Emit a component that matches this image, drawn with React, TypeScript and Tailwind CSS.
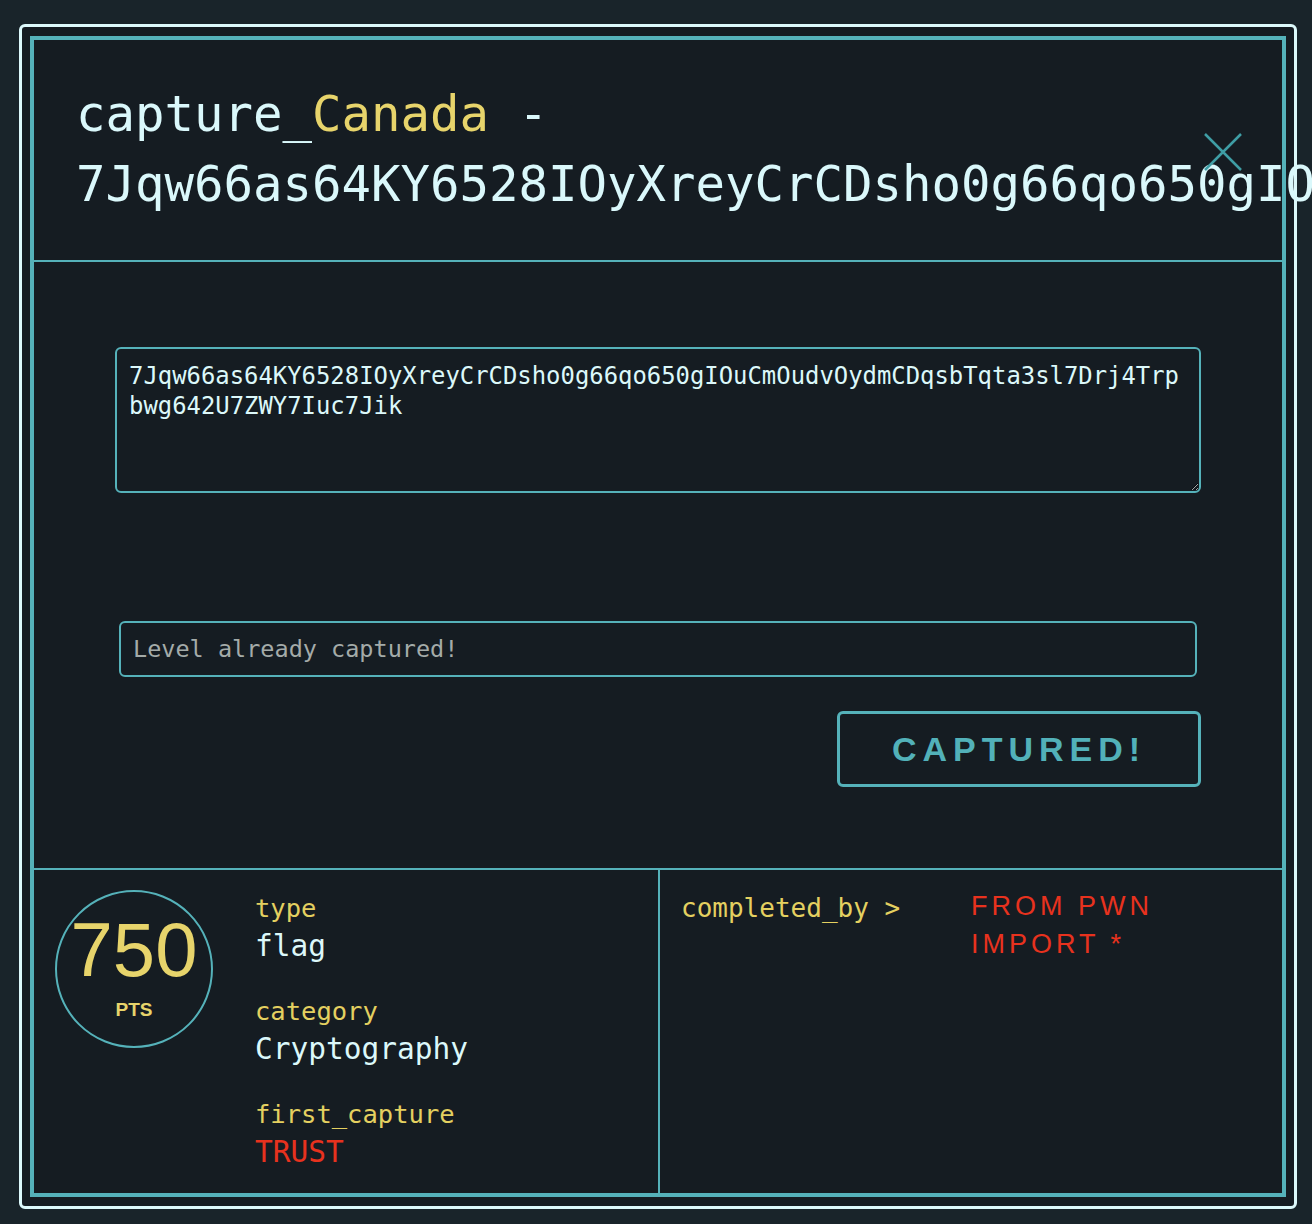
import { useState } from 'react';

const mono = "font-['DejaVu_Sans_Mono',monospace]";
const sans = "font-['Liberation_Sans',Arial,sans-serif]";

interface LevelInfo {
  country: string;
  hash: string;
  flag: string;
  points: number;
  type: string;
  category: string;
  firstCapture: string;
  completedBy: string[];
}

const level: LevelInfo = {
  country: 'Canada',
  hash: '7Jqw66as64KY6528IOyXreyCrCDsho0g66qo650gIOuCmOudvOydmCDqsbTqta3sl7Drj4Trp',
  flag: '7Jqw66as64KY6528IOyXreyCrCDsho0g66qo650gIOuCmOudvOydmCDqsbTqta3sl7Drj4Trpbwg642U7ZWY7Iuc7Jik',
  points: 750,
  type: 'flag',
  category: 'Cryptography',
  firstCapture: 'TRUST',
  completedBy: ['FROM PWN IMPORT *'],
};

function CloseIcon() {
  return (
    <svg width="38" height="38" viewBox="0 0 38 38" fill="none">
      <path d="M1 1L37 37M37 1L1 37" stroke="#3f9ea5" strokeWidth="2.5" />
    </svg>
  );
}

export default function App() {
  const [answer, setAnswer] = useState('');

  return (
    <div className="min-h-screen w-full overflow-hidden bg-[#19242a] pt-6 pb-4 pl-[19px] pr-[15px]">
      <div className="rounded-md border-[3px] border-[#dcf9fb] bg-[#151c22] px-2 py-[9px]">
        <div className="border-4 border-[#55b2ba]">
          {/* header */}
          <div className="relative h-[222px] border-b-2 border-[#55b2ba] pl-[42px] pt-[40px]">
            <h1 className={`${mono} text-[49px] leading-[70px] text-[#daf8fb]`}>
              capture_<span className="text-[#e7d46b]">{level.country}</span> - {level.hash.slice(0, 45)}
            </h1>
            <button className="absolute right-10 top-[93px]">
              <CloseIcon />
            </button>
          </div>

          {/* body */}
          <div className="border-b-2 border-[#55b2ba] px-[81px] pt-[85px] pb-[81px]">
            <textarea
              readOnly
              value={level.flag}
              className={`${mono} block h-[146px] w-full rounded-md border-2 border-[#55b2ba] bg-transparent px-3 pt-3 text-[23.9px] leading-[30px] text-[#dcf8fa] outline-none`}
            />
            <div className="mt-[128px] px-1">
              <input
                value={answer}
                onChange={e => setAnswer(e.target.value)}
                placeholder="Level already captured!"
                className={`${mono} block h-[56px] w-full rounded-md border-2 border-[#55b2ba] bg-transparent px-3 text-[23.5px] text-[#dcf8fa] outline-none placeholder:text-[#a4aba9]`}
              />
            </div>
            <div className="mt-[34px] flex justify-end">
              <button
                className={`${sans} flex h-[76px] w-[364px] items-center justify-center rounded-md border-[3px] border-[#55b2ba] text-[34px] font-bold tracking-[6px] text-[#52b1b9]`}
              >
                CAPTURED!
              </button>
            </div>
          </div>

          {/* footer */}
          <div className="flex h-[323px]">
            <div className="flex w-[626px] border-r-2 border-[#55b2ba] pl-[21px] pt-5">
              <div className="flex h-[158px] w-[158px] shrink-0 flex-col items-center justify-center rounded-full border-2 border-[#55b2ba]">
                <span className={`${sans} text-[76px] leading-[64px] text-[#e7d46b]`}>{level.points}</span>
                <span className={`${sans} mt-[18px] text-[19px] font-semibold leading-[20px] text-[#e7d46b]`}>PTS</span>
              </div>
              <div className={`${mono} ml-[42px]`}>
                <div className="text-[25.5px] leading-[36px] text-[#e4d060]">type</div>
                <div className="text-[29.5px] leading-[40px] text-[#dcf8fa]">{level.type}</div>
                <div className="mt-[27px] text-[25.5px] leading-[36px] text-[#e4d060]">category</div>
                <div className="text-[29.5px] leading-[40px] text-[#dcf8fa]">{level.category}</div>
                <div className="mt-[27px] text-[25.5px] leading-[36px] text-[#e4d060]">first_capture</div>
                <div className="text-[29.5px] leading-[40px] text-[#e8321e]">{level.firstCapture}</div>
              </div>
            </div>
            <div className="flex flex-1 pl-[21px] pt-5">
              <div className={`${mono} w-[290px] shrink-0 text-[26px] leading-[36px] text-[#e4d060]`}>completed_by &gt;</div>
              <div className="-mt-[3px]">
                {level.completedBy.map(name => (
                  <div key={name} className={`${sans} w-[220px] text-[27px] leading-[38px] tracking-[4px] text-[#e8321e]`}>
                    {name}
                  </div>
                ))}
              </div>
            </div>
          </div>
        </div>
      </div>
    </div>
  );
}
